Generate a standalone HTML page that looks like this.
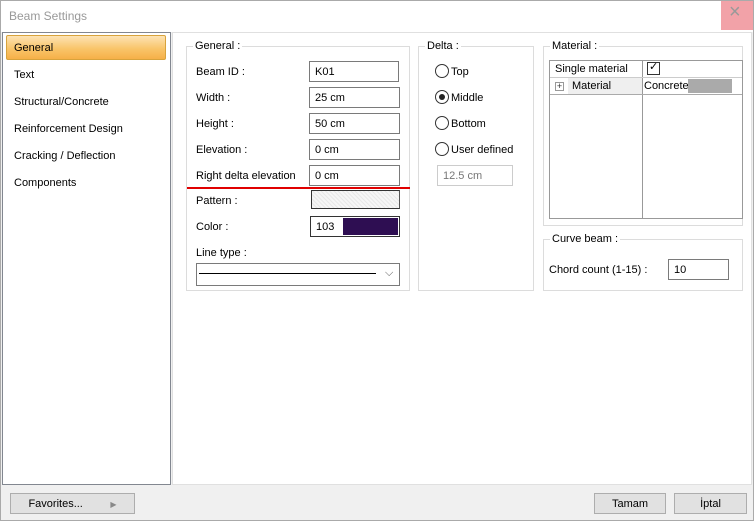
<!DOCTYPE html><html><head><style>
*{margin:0;padding:0;box-sizing:border-box}
body{width:754px;height:521px;position:relative;background:#f0f0f0;font-family:"Liberation Sans",sans-serif;font-size:11px;color:#000;overflow:hidden}
div,span{position:absolute}
.t{white-space:nowrap;line-height:15px}
.in{background:#fff;border:1px solid #7a7a7a;padding:3px 0 0 5px;height:21px}
.grp{border:1px solid #dcdcdc}
.lg{background:#fff;padding:0 2px;top:-8px;left:6px}
.rad{width:14px;height:14px;border:1px solid #333;border-radius:50%;background:#fff}
.btn{background:#e1e1e1;border:1px solid #adadad;text-align:center;padding-top:3px;height:21px}
</style></head><body>
<div style="left:0;top:0;width:754px;height:32px;background:#fff;border:1px solid #aaa;border-bottom:none"></div>
<div class="t" style="left:9px;top:9px;font-size:12px;color:#999">Beam Settings</div>
<div style="left:721px;top:1px;width:32px;height:29px;background:#f2a2a8"></div>
<div class="t" style="left:729px;top:5px;font-size:20px;color:#999">×</div>
<div style="left:0;top:32px;width:1px;height:489px;background:#aaa"></div>
<div style="left:753px;top:32px;width:1px;height:489px;background:#aaa"></div>
<div style="left:0;top:520px;width:754px;height:1px;background:#aaa"></div>
<div style="left:2px;top:32px;width:169px;height:453px;background:#fff;border:1px solid #828790"></div>
<div style="left:6px;top:35px;width:160px;height:25px;border:1px solid #d8a33c;border-radius:2px;background:linear-gradient(#fde3b5,#f9c56a 55%,#f6b048)"></div>
<div class="t" style="left:14px;top:41px">General</div>
<div class="t" style="left:14px;top:68px">Text</div>
<div class="t" style="left:14px;top:95px">Structural/Concrete</div>
<div class="t" style="left:14px;top:122px">Reinforcement Design</div>
<div class="t" style="left:14px;top:149px">Cracking / Deflection</div>
<div class="t" style="left:14px;top:176px">Components</div>
<div style="left:172px;top:32px;width:580px;height:453px;background:#fff;border:1px solid #e0e0e0"></div>
<div class="grp" style="left:186px;top:46px;width:224px;height:245px"><span class="lg t">General :</span></div>
<div class="t" style="left:196px;top:65px">Beam ID :</div>
<div class="t" style="left:196px;top:91px">Width :</div>
<div class="t" style="left:196px;top:117px">Height :</div>
<div class="t" style="left:196px;top:143px">Elevation :</div>
<div class="t" style="left:196px;top:169px">Right delta elevation</div>
<div class="t" style="left:196px;top:194px">Pattern :</div>
<div class="t" style="left:196px;top:220px">Color :</div>
<div class="t" style="left:196px;top:246px">Line type :</div>
<div class="in t" style="left:309px;top:61px;width:90px">K01</div>
<div class="in t" style="left:309px;top:87px;width:91px">25 cm</div>
<div class="in t" style="left:309px;top:113px;width:91px">50 cm</div>
<div class="in t" style="left:309px;top:139px;width:91px">0 cm</div>
<div class="in t" style="left:309px;top:165px;width:91px">0 cm</div>
<div style="left:187px;top:187px;width:223px;height:2px;background:#e00000"></div>
<div style="left:311px;top:190px;width:89px;height:19px;border:1px solid #333;border-right-color:#555;background:repeating-linear-gradient(45deg,#e8e8e8 0 1px,#f6f6f6 1px 3px)"></div>
<div style="left:310px;top:216px;width:90px;height:21px;border:1px solid #333;background:#fff"></div>
<div class="t" style="left:316px;top:220px">103</div>
<div style="left:343px;top:218px;width:55px;height:17px;background:#2e0e52"></div>
<div style="left:196px;top:263px;width:204px;height:23px;border:1px solid #7a7a7a;background:#fff"></div>
<div style="left:199px;top:273px;width:177px;height:1px;background:#000"></div>
<div class="t" style="left:385px;top:266px;color:#555;font-size:11px">⌵</div>
<div class="grp" style="left:418px;top:46px;width:116px;height:245px"><span class="lg t">Delta :</span></div>
<div class="rad" style="left:435px;top:64px"></div><div class="t" style="left:451px;top:65px">Top</div>
<div class="rad" style="left:435px;top:90px"></div><div style="left:439px;top:94px;width:6px;height:6px;border-radius:50%;background:#222"></div><div class="t" style="left:451px;top:91px">Middle</div>
<div class="rad" style="left:435px;top:116px"></div><div class="t" style="left:451px;top:117px">Bottom</div>
<div class="rad" style="left:435px;top:142px"></div><div class="t" style="left:451px;top:143px">User defined</div>
<div class="in t" style="left:437px;top:165px;width:76px;border-color:#ccc;color:#777">12.5 cm</div>
<div class="grp" style="left:543px;top:46px;width:200px;height:180px"><span class="lg t">Material :</span></div>
<div style="left:549px;top:60px;width:194px;height:159px;border:1px solid #999;background:#fff"></div>
<div style="left:642px;top:60px;width:1px;height:158px;background:#999"></div>
<div style="left:550px;top:77px;width:192px;height:1px;background:#ccc"></div>
<div style="left:568px;top:78px;width:74px;height:16px;background:#efefef"></div>
<div style="left:550px;top:94px;width:192px;height:1px;background:#aaa"></div>
<div class="t" style="left:555px;top:62px">Single material</div>
<div style="left:647px;top:62px;width:13px;height:13px;border:1px solid #333"></div>
<div class="t" style="left:649px;top:60px;font-size:11px">✓</div>
<div style="left:555px;top:82px;width:9px;height:9px;border:1px solid #999;font-size:9px;line-height:7px;text-align:center;color:#333">+</div>
<div class="t" style="left:572px;top:79px">Material</div>
<div class="t" style="left:644px;top:79px">Concrete</div>
<div style="left:688px;top:79px;width:44px;height:14px;background:#aaa"></div>
<div class="grp" style="left:543px;top:239px;width:200px;height:52px"><span class="lg t">Curve beam :</span></div>
<div class="t" style="left:549px;top:263px">Chord count (1-15) :</div>
<div class="in t" style="left:668px;top:259px;width:61px">10</div>
<div class="btn t" style="left:10px;top:493px;width:125px">Favorites...&nbsp;&nbsp;&nbsp;&nbsp;&nbsp;&nbsp;&nbsp;&nbsp;&nbsp;<span style="position:relative;color:#888;font-size:8px">▶</span></div>
<div class="btn t" style="left:594px;top:493px;width:72px">Tamam</div>
<div class="btn t" style="left:674px;top:493px;width:73px">İptal</div>
</body></html>
